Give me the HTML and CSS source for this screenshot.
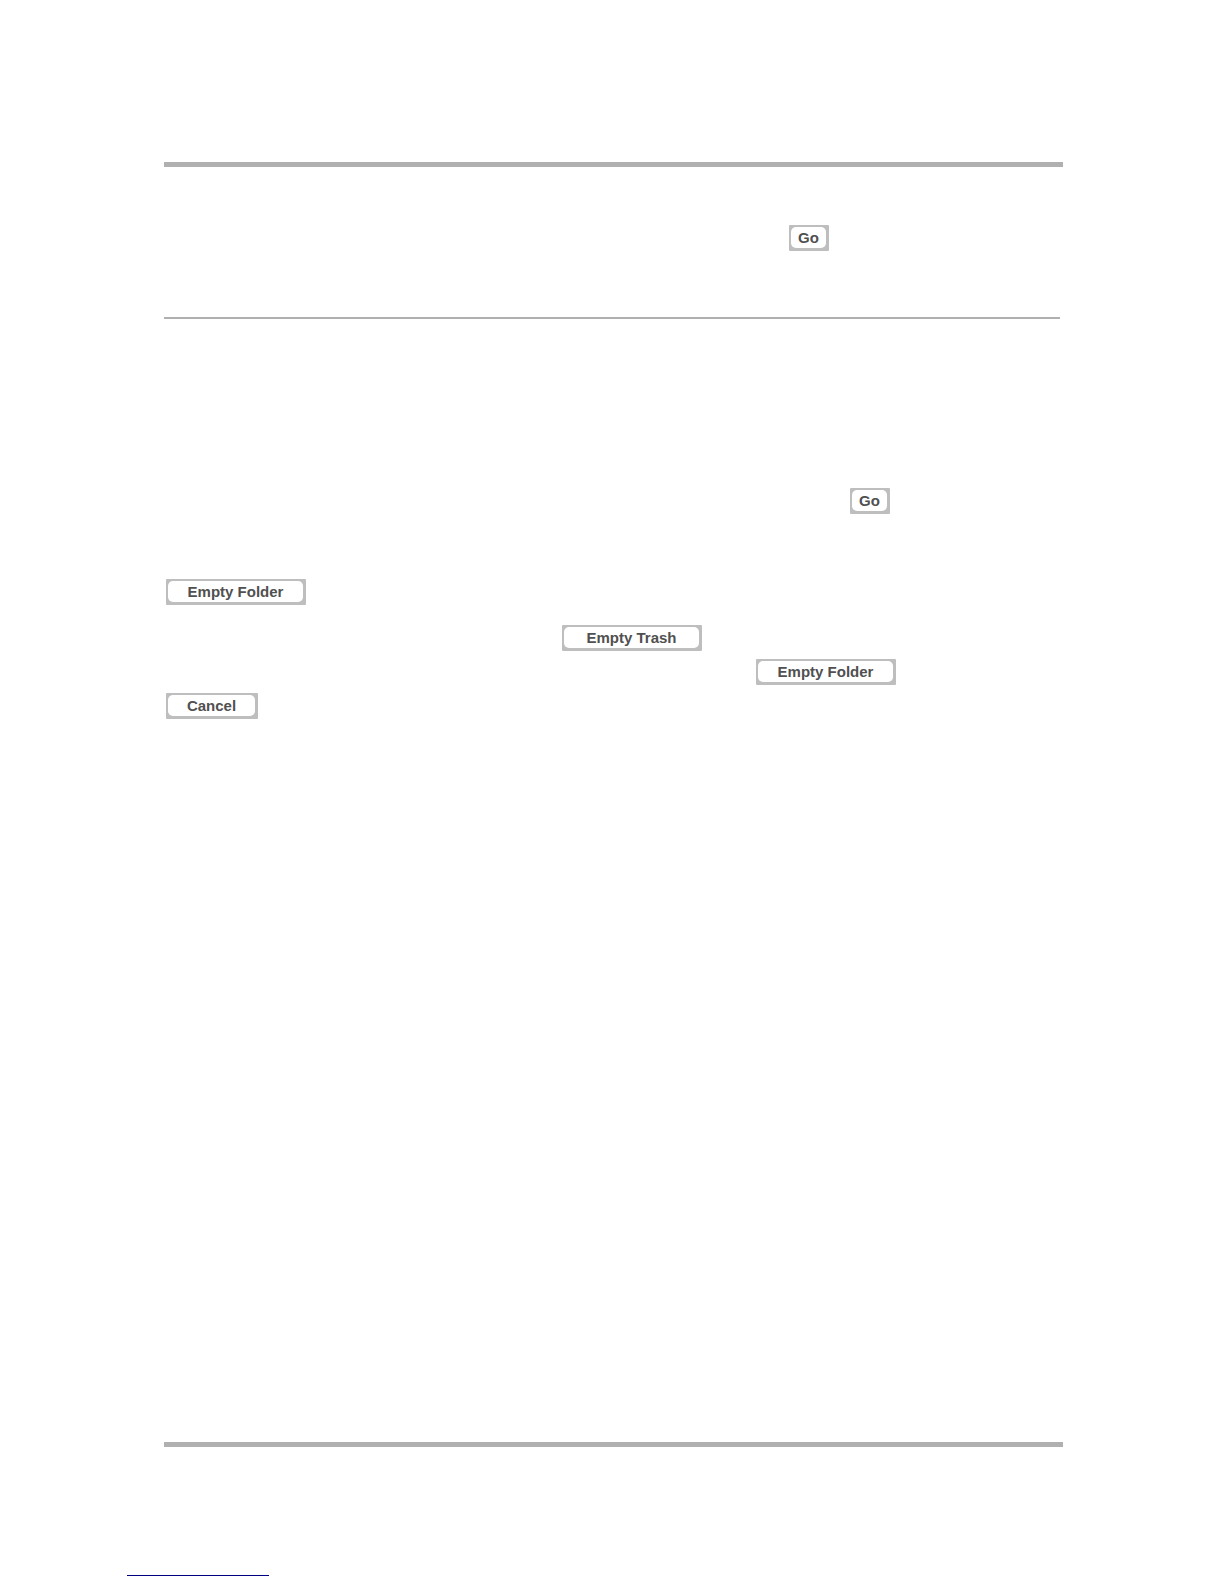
FILE: index.html
```html
<!DOCTYPE html>
<html lang="en">
<head>
    <meta charset="UTF-8">
    <meta name="viewport" content="width=device-width, initial-scale=1.0">
    <title>Mail Folders</title>
    <link rel="stylesheet" href="styles.css">
</head>
<body>

<main class="page">
    <hr class="rule">

    <section class="move-section">
        <div class="row row-go">
            <button type="button" class="btn btn-small"><span>Go</span></button>
        </div>
    </section>

    <hr class="divider">

    <section class="empty-section">
        <div class="row row-folder-go">
            <button type="button" class="btn btn-small"><span>Go</span></button>
        </div>
        <div class="row">
            <button type="button" class="btn btn-large"><span>Empty Folder</span></button>
        </div>
    </section>

    <!-- Trash and confirmation buttons -->
    <section class="confirm">
        <div class="row row-trash">
            <button type="button" class="btn btn-large"><span>Empty Trash</span></button>
        </div>
        <div class="row row-folder">
            <button type="button" class="btn btn-large"><span>Empty Folder</span></button>
        </div>
        <div class="row">
            <button type="button" class="btn btn-medium"><span>Cancel</span></button>
        </div>
    </section>

    <hr class="rule rule-bottom">
</main>

<footer class="footer">
    <a href="#" class="footer-link" aria-label="Back to top"></a>
</footer>

</body>
</html>
```
FILE: styles.css
```css
:root {
    --rule-color: #b0b0b0;
    --button-edge: #bebebe;
    --button-text: #505050;
    --link-color: #000080;
}

* {
    box-sizing: border-box;
}

body {
    display: flex;
    flex-direction: column;
    min-height: 100vh;
    margin: 0;
    background-color: #fff;
    font-family: "Liberation Sans", Arial, sans-serif;
}

.page {
    display: flex;
    flex-direction: column;
    flex: 1;
    padding: 162px 161px 0 164px;
}

hr {
    width: 100%;
    margin: 0;
    border: none;
}

.rule {
    height: 5px;
    background-color: var(--rule-color);
}

.rule-bottom {
    margin-top: auto;
}

.divider {
    width: auto;
    height: 2px;
    margin-right: 3px;
    background-color: var(--rule-color);
}

.move-section {
    padding: 58px 0 66px;
}

.empty-section {
    display: flex;
    flex-direction: column;
    gap: 65px;
    padding-top: 169px;
}

.confirm {
    display: flex;
    flex-direction: column;
    gap: 8px;
    padding-top: 20px;
}

.row {
    display: flex;
    padding-left: 2px;
}

.row-go,
.row-folder-go,
.row-trash,
.row-folder {
    justify-content: flex-end;
}

.row-go {
    padding-right: 234px;
}

.row-folder-go {
    padding-right: 173px;
}

.row-trash {
    padding-right: 361px;
}

.row-folder {
    padding-right: 167px;
}

.btn {
    display: flex;
    height: 26px;
    padding: 2px 3px 3px 2px;
    border: none;
    border-radius: 1px;
    background-color: var(--button-edge);
    color: var(--button-text);
    font-family: inherit;
    font-size: 15px;
    font-weight: bold;
    line-height: 21px;
    cursor: pointer;
}

.btn span {
    flex: 1;
    border-radius: 5px;
    background-color: #fff;
}

.btn-small {
    width: 40px;
}

.btn-medium {
    width: 92px;
}

.btn-large {
    width: 140px;
}

.footer {
    padding: 112px 127px 8px;
}

.footer-link {
    display: block;
    width: 142px;
    height: 17px;
    border-bottom: 1px solid var(--link-color);
}
```
